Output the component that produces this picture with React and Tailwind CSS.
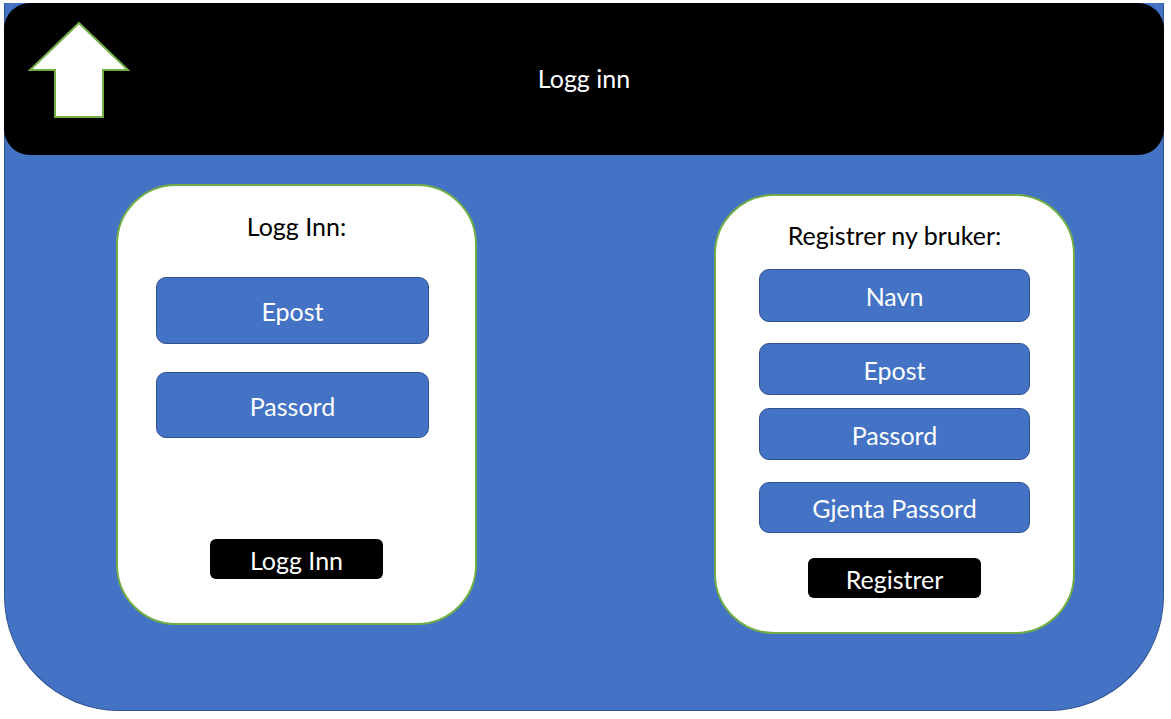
import React from 'react';

const font = { fontFamily: 'Lato, "Open Sans", sans-serif' };

function Field({ label, className }) {
  return (
    <div
      className={`flex items-center justify-center rounded-[10px] border-[1.5px] border-[#2F528F] bg-[#4472C4] pt-[3px] text-[25px] text-white ${className}`}
    >
      {label}
    </div>
  );
}

function ArrowIcon() {
  return (
    <svg width="104" height="100" viewBox="0 0 104 100" className="ml-[23px] mt-[17px] self-start">
      <polygon
        points="52,3 101,50 76,50 76,97 28,97 28,50 3,50"
        fill="#ffffff"
        stroke="#70AD47"
        strokeWidth="2"
      />
    </svg>
  );
}

export default function App() {
  return (
    <div className="h-[719px] w-[1171px] bg-white pl-[4px] pt-[3px]" style={font}>
      <div className="flex h-[708px] w-[1160px] flex-col rounded-b-[115px] border border-t-0 border-[#2F528F] bg-[#4472C4]">
        {/* Header */}
        <div className="-mx-px grid h-[152px] grid-cols-[1fr_auto_1fr] items-center rounded-[26px] bg-black">
          <ArrowIcon />
          <span className="text-[25px] text-white">Logg inn</span>
          <div />
        </div>

        <div className="flex items-start">
          {/* Login card */}
          <div className="ml-[111px] mt-[29px] flex h-[441px] w-[361px] flex-col rounded-[60px] border-2 border-[#70AD47] bg-white">
            <div className="mt-[25px] text-center text-[25px] leading-[30px] text-black">Logg Inn:</div>
            <Field label="Epost" className="ml-[38px] mt-[36px] h-[67px] w-[273px]" />
            <Field label="Passord" className="ml-[38px] mt-[28px] h-[66px] w-[273px]" />
            <div className="mx-auto mt-[101px] flex h-[40px] w-[173px] items-center justify-center rounded-[6px] bg-black pt-[3px] text-[25px] text-white">
              Logg Inn
            </div>
          </div>

          {/* Register card */}
          <div className="ml-[237px] mt-[39px] flex h-[440px] w-[361px] flex-col rounded-[60px] border-2 border-[#70AD47] bg-white">
            <div className="mt-[24px] text-center text-[25px] leading-[30px] text-black">Registrer ny bruker:</div>
            <Field label="Navn" className="ml-[43px] mt-[19px] h-[53px] w-[271px]" />
            <Field label="Epost" className="ml-[43px] mt-[21px] h-[52px] w-[271px]" />
            <Field label="Passord" className="ml-[43px] mt-[13px] h-[52px] w-[271px]" />
            <Field label="Gjenta Passord" className="ml-[43px] mt-[22px] h-[51px] w-[271px]" />
            <div className="mx-auto mt-[25px] flex h-[40px] w-[173px] items-center justify-center rounded-[6px] bg-black pt-[3px] text-[25px] text-white">
              Registrer
            </div>
          </div>
        </div>
      </div>
    </div>
  );
}
